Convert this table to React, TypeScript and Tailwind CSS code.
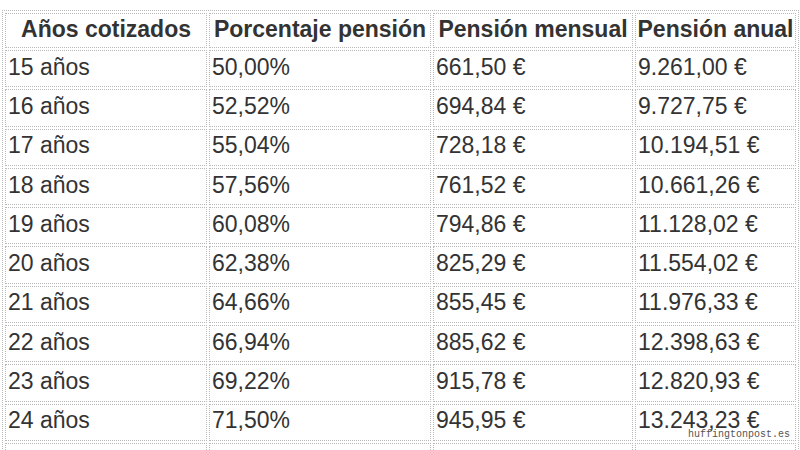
const rows = [
  ["15 años", "50,00%", "661,50 €", "9.261,00 €"],
  ["16 años", "52,52%", "694,84 €", "9.727,75 €"],
  ["17 años", "55,04%", "728,18 €", "10.194,51 €"],
  ["18 años", "57,56%", "761,52 €", "10.661,26 €"],
  ["19 años", "60,08%", "794,86 €", "11.128,02 €"],
  ["20 años", "62,38%", "825,29 €", "11.554,02 €"],
  ["21 años", "64,66%", "855,45 €", "11.976,33 €"],
  ["22 años", "66,94%", "885,62 €", "12.398,63 €"],
  ["23 años", "69,22%", "915,78 €", "12.820,93 €"],
  ["24 años", "71,50%", "945,95 €", "13.243,23 €"],
  ["\u00a0", "\u00a0", "\u00a0", "\u00a0"],
];

const headers = ["Años cotizados", "Porcentaje pensión", "Pensión mensual", "Pensión anual"];
const widths = ["w-[202px]", "w-[222px]", "w-[200px]", "w-[161px]"];

export default function App() {
  return (
    <div className="relative h-[450px] w-[800px] overflow-hidden bg-white pt-[10px] pl-[2px] font-['Liberation_Sans',Arial,sans-serif] text-[#333]">
      <table className="table-fixed w-[797px] border-separate border-spacing-[2px] border border-dotted border-[#b8b8b8]">
        <thead>
          <tr>
            {headers.map((h, i) => (
              <th
                key={h}
                className={`${widths[i]} h-[35px] border border-dotted border-[#b8b8b8] px-[1px] pb-[3px] text-center text-[23px] font-bold leading-none whitespace-nowrap`}
              >
                {h}
              </th>
            ))}
          </tr>
        </thead>
        <tbody>
          {rows.map((r, ri) => (
            <tr key={ri}>
              {r.map((c, i) => (
                <td
                  key={i}
                  className="h-[37.3px] border border-dotted border-[#b8b8b8] px-[2px] pb-[3px] text-left text-[23px] leading-none whitespace-nowrap"
                >
                  {c}
                </td>
              ))}
            </tr>
          ))}
        </tbody>
      </table>
      <span className="absolute right-[10px] bottom-[10px] font-['Liberation_Mono',monospace] text-[10px] leading-none text-[#555]">
        huffingtonpost.es
      </span>
    </div>
  );
}
